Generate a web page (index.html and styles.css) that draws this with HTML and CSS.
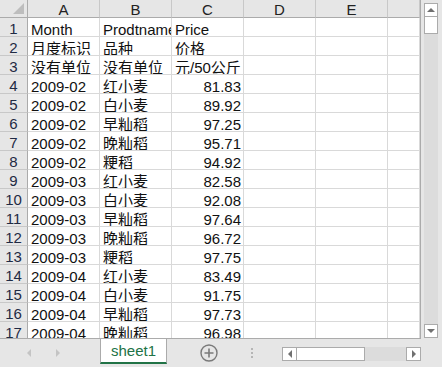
FILE: index.html
```html
<!DOCTYPE html>
<html lang="zh">
<head>
  <meta charset="UTF-8">
  <title>sheet1</title>
  <link rel="stylesheet" href="styles.css">
</head>
<body>
  <div class="book">
    <div class="main">
      <!-- Tablo -->
      <div class="sheet">
        <div class="grid">
          <div class="corner"></div>
          <div class="colhead">A</div>
          <div class="colhead">B</div>
          <div class="colhead">C</div>
          <div class="colhead">D</div>
          <div class="colhead">E</div>
          <div class="colhead"></div>

          <div class="rowhead">1</div><div class="cell">Month</div><div class="cell">Prodtname</div><div class="cell">Price</div><div class="cell"></div><div class="cell"></div><div class="cell"></div>
          <div class="rowhead">2</div><div class="cell">月度标识</div><div class="cell">品种</div><div class="cell">价格</div><div class="cell"></div><div class="cell"></div><div class="cell"></div>
          <div class="rowhead">3</div><div class="cell">没有单位</div><div class="cell">没有单位</div><div class="cell">元/50公斤</div><div class="cell"></div><div class="cell"></div><div class="cell"></div>
          <div class="rowhead">4</div><div class="cell">2009-02</div><div class="cell">红小麦</div><div class="cell num">81.83</div><div class="cell"></div><div class="cell"></div><div class="cell"></div>
          <div class="rowhead">5</div><div class="cell">2009-02</div><div class="cell">白小麦</div><div class="cell num">89.92</div><div class="cell"></div><div class="cell"></div><div class="cell"></div>
          <div class="rowhead">6</div><div class="cell">2009-02</div><div class="cell">早籼稻</div><div class="cell num">97.25</div><div class="cell"></div><div class="cell"></div><div class="cell"></div>
          <div class="rowhead">7</div><div class="cell">2009-02</div><div class="cell">晚籼稻</div><div class="cell num">95.71</div><div class="cell"></div><div class="cell"></div><div class="cell"></div>
          <div class="rowhead">8</div><div class="cell">2009-02</div><div class="cell">粳稻</div><div class="cell num">94.92</div><div class="cell"></div><div class="cell"></div><div class="cell"></div>
          <div class="rowhead">9</div><div class="cell">2009-03</div><div class="cell">红小麦</div><div class="cell num">82.58</div><div class="cell"></div><div class="cell"></div><div class="cell"></div>
          <div class="rowhead">10</div><div class="cell">2009-03</div><div class="cell">白小麦</div><div class="cell num">92.08</div><div class="cell"></div><div class="cell"></div><div class="cell"></div>
          <div class="rowhead">11</div><div class="cell">2009-03</div><div class="cell">早籼稻</div><div class="cell num">97.64</div><div class="cell"></div><div class="cell"></div><div class="cell"></div>
          <div class="rowhead">12</div><div class="cell">2009-03</div><div class="cell">晚籼稻</div><div class="cell num">96.72</div><div class="cell"></div><div class="cell"></div><div class="cell"></div>
          <div class="rowhead">13</div><div class="cell">2009-03</div><div class="cell">粳稻</div><div class="cell num">97.75</div><div class="cell"></div><div class="cell"></div><div class="cell"></div>
          <div class="rowhead">14</div><div class="cell">2009-04</div><div class="cell">红小麦</div><div class="cell num">83.49</div><div class="cell"></div><div class="cell"></div><div class="cell"></div>
          <div class="rowhead">15</div><div class="cell">2009-04</div><div class="cell">白小麦</div><div class="cell num">91.75</div><div class="cell"></div><div class="cell"></div><div class="cell"></div>
          <div class="rowhead">16</div><div class="cell">2009-04</div><div class="cell">早籼稻</div><div class="cell num">97.73</div><div class="cell"></div><div class="cell"></div><div class="cell"></div>
          <div class="rowhead">17</div><div class="cell">2009-04</div><div class="cell">晚籼稻</div><div class="cell num">96.98</div><div class="cell"></div><div class="cell"></div><div class="cell"></div>
        </div>
      </div>

      <!-- Dikey kaydırma çubuğu -->
      <div class="vscroll">
        <div class="sbtn"><span class="tri up"></span></div>
        <div class="vthumb"></div>
        <div class="vtrack"></div>
        <div class="sbtn"><span class="tri down"></span></div>
      </div>
    </div>

    <!-- Alt çubuk -->
    <div class="bottom">
      <div class="nav">
        <span class="tri left light"></span>
        <span class="tri right light"></span>
      </div>
      <div class="tab">sheet1</div>
      <div class="add">
        <svg width="18" height="18" viewBox="0 0 18 18">
          <circle cx="9" cy="9" r="8" fill="none" stroke="#7a7a7a" stroke-width="1.4"/>
          <path d="M9 4.5v9M4.5 9h9" stroke="#7a7a7a" stroke-width="1.6"/>
        </svg>
      </div>
      <div class="dots"><span></span><span></span><span></span></div>
      <div class="hscroll">
        <div class="hbtn"><span class="tri left"></span></div>
        <div class="hthumb"></div>
        <div class="htrack"></div>
        <div class="hbtn"><span class="tri right"></span></div>
      </div>
    </div>
  </div>
</body>
</html>
```

FILE: styles.css
```css
* {
    box-sizing: border-box;
}

body {
    margin: 0;
    background: #e6e6e6;
    font-family: "Liberation Sans", "Noto Sans CJK SC", sans-serif;
    font-size: 15px;
    color: #111;
}

.book {
    width: 442px;
    height: 367px;
    display: flex;
    flex-direction: column;
    overflow: hidden;
}

/* Üst kısım: tablo + kaydırma */
.main {
    display: flex;
    height: 339px;
}

.sheet {
    width: 421px;
    height: 339px;
    overflow: hidden;
    border-right: 1px solid #ababab;
    border-bottom: 1px solid #ababab;
    background: #fff;
}

.grid {
    display: grid;
    grid-template-columns: 28px 72px 72px 72px 72px 72px 32px;
    grid-template-rows: 18px;
    grid-auto-rows: 19px;
}

.corner,
.colhead,
.rowhead {
    background: #e6e6e6;
    color: #222;
    display: flex;
    align-items: center;
    justify-content: center;
    border-right: 1px solid #c8c8c8;
    border-bottom: 1px solid #c8c8c8;
}

.colhead {
    border-bottom-color: #ababab;
    padding-top: 2px;
}

.rowhead {
    border-right-color: #ababab;
    color: #1f2a44;
    padding-top: 3px;
}

.corner {
    position: relative;
    border-right-color: #ababab;
    border-bottom-color: #ababab;
}

.corner::after {
    content: "";
    position: absolute;
    right: 3px;
    bottom: 3px;
    border-style: solid;
    border-width: 0 0 11px 11px;
    border-color: transparent transparent #bdbdbd transparent;
}

.cell {
    border-right: 1px solid #d9d9d9;
    border-bottom: 1px solid #d9d9d9;
    padding: 0 2px 0 3px;
    white-space: nowrap;
    overflow: hidden;
    line-height: 23px;
}

.cell.num {
    text-align: right;
}

/* Dikey kaydırma çubuğu */
.vscroll {
    width: 21px;
    padding: 3px 4px 1px 3px;
    display: flex;
    flex-direction: column;
}

.sbtn {
    height: 14px;
    background: #fff;
    border: 1px solid #ababab;
    display: flex;
    align-items: center;
    justify-content: center;
}

.vthumb {
    height: 17px;
    background: #fff;
    border: 1px solid #ababab;
    border-top: none;
}

.vtrack {
    flex: 1;
    background: #dcdcdc;
}

.tri {
    display: block;
    width: 0;
    height: 0;
    border-style: solid;
}

.tri.up {
    border-width: 0 4px 4px 4px;
    border-color: transparent transparent #707070 transparent;
}

.tri.down {
    border-width: 4px 4px 0 4px;
    border-color: #707070 transparent transparent transparent;
}

.tri.left {
    border-width: 4px 4px 4px 0;
    border-color: transparent #707070 transparent transparent;
}

.tri.right {
    border-width: 4px 0 4px 4px;
    border-color: transparent transparent transparent #707070;
}

.tri.left.light {
    border-color: transparent #c4c4c4 transparent transparent;
}

.tri.right.light {
    border-color: transparent transparent transparent #c4c4c4;
}

/* Alt çubuk */
.bottom {
    flex: 1;
    display: flex;
    align-items: flex-start;
}

.nav {
    width: 100px;
    height: 28px;
    display: flex;
    align-items: center;
    gap: 25px;
    padding-left: 27px;
}

.tab {
    width: 67px;
    height: 25px;
    background: #fff;
    color: #217346;
    border-left: 1px solid #ababab;
    border-right: 1px solid #ababab;
    border-bottom: 2px solid #217346;
    text-align: center;
    line-height: 23px;
}

.add {
    width: 84px;
    height: 28px;
    display: flex;
    align-items: center;
    padding-left: 33px;
}

.add svg {
    display: block;
}

.dots {
    width: 31px;
    height: 28px;
    display: flex;
    flex-direction: column;
    justify-content: center;
    gap: 2px;
    padding-left: 0;
}

.dots span {
    width: 2px;
    height: 2px;
    background: #b5b5b5;
}

.hscroll {
    width: 139px;
    height: 14px;
    margin-top: 8px;
    display: flex;
}

.hbtn {
    width: 15px;
    background: #fff;
    border: 1px solid #ababab;
    display: flex;
    align-items: center;
    justify-content: center;
}

.hthumb {
    width: 68px;
    background: #fff;
    border: 1px solid #ababab;
    border-left: none;
}

.htrack {
    flex: 1;
    background: #dcdcdc;
}
```
